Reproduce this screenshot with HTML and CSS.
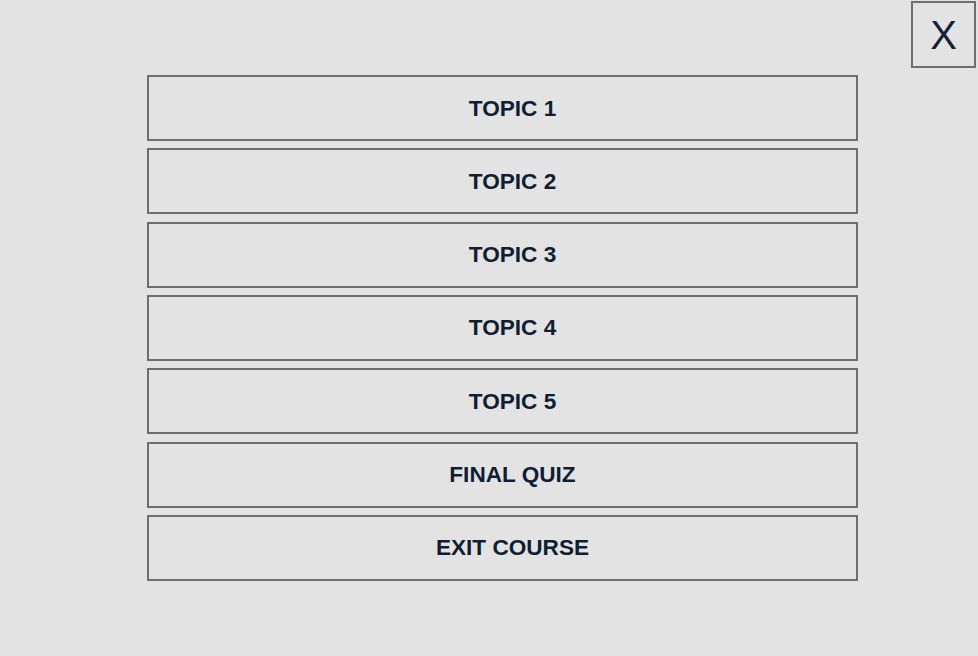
FILE: index.html
```html
<!DOCTYPE html>
<html>
<head>
<meta charset="utf-8">
<link rel="stylesheet" href="styles.css">
</head>
<body>
<div class="page">
  <button class="close">X</button>
  <nav class="menu">
    <button class="item">TOPIC 1</button>
    <button class="item">TOPIC 2</button>
    <button class="item">TOPIC 3</button>
    <button class="item">TOPIC 4</button>
    <button class="item">TOPIC 5</button>
    <button class="item">FINAL QUIZ</button>
    <button class="item">EXIT COURSE</button>
  </nav>
</div>
</body>
</html>
```
FILE: styles.css
```css
html, body {
  margin: 0;
  padding: 0;
  background: #e3e3e3;
  font-family: "Liberation Sans", Arial, sans-serif;
}
.page {
  position: relative;
  width: 978px;
  height: 656px;
  padding-top: 75px;
  box-sizing: border-box;
}
.close {
  position: absolute;
  left: 911px;
  top: 1px;
  width: 65px;
  height: 67px;
  border: 2px solid #6e6e6e;
  background: #e3e3e3;
  color: #14233a;
  font-family: "Liberation Sans", Arial, sans-serif;
  font-size: 40px;
  font-weight: normal;
  padding: 0;
  line-height: 1;
  cursor: pointer;
}
.menu {
  margin-left: 147px;
  width: 711px;
  display: flex;
  flex-direction: column;
  gap: 7.33px;
}
.item {
  height: 66px;
  border: 2px solid #6e6e6e;
  background: #e3e3e3;
  color: #0f1e33;
  font-family: "Liberation Sans", Arial, sans-serif;
  font-size: 22.6px;
  font-weight: bold;
  padding: 1px 0 0 20px;
  margin: 0;
  cursor: pointer;
}
```
